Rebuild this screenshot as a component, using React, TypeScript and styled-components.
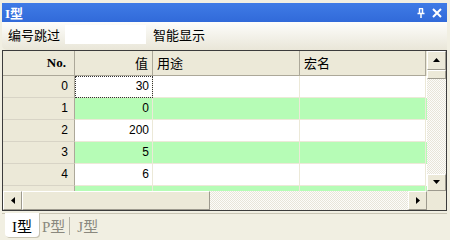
import { FC } from 'react';
import styled, { createGlobalStyle } from 'styled-components';

const GlobalStyle = createGlobalStyle`
  html, body {
    margin: 0;
    padding: 0;
    background: #f1efe2;
  }
`;

const Frame = styled.div`
  width: 450px;
  height: 240px;
  box-sizing: border-box;
  padding: 3px 3px 0 2px;
  background: #f1efe2;
  display: flex;
  flex-direction: column;
  overflow: hidden;
  font-family: "Noto Sans CJK SC", sans-serif;
`;

const TitleBar = styled.div`
  height: 19px;
  display: flex;
  align-items: center;
  justify-content: space-between;
  padding: 0 5px 0 3px;
  background: linear-gradient(#3f7be6, #316ad9);
  color: #fff;
`;

const Title = styled.span`
  font-family: "Liberation Serif", "Noto Sans CJK SC", serif;
  font-weight: bold;
  font-size: 13px;
`;

const TitleButtons = styled.div`
  display: flex;
  align-items: center;
  gap: 7px;
`;

const Toolbar = styled.div`
  height: 28px;
  display: flex;
  align-items: center;
  padding: 0 0 2px 6px;
  box-sizing: border-box;
  background: linear-gradient(#fdfdfb, #e9e6d8);
  border-bottom-left-radius: 5px;
  font-size: 13px;
  color: #000;
`;

const ToolInput = styled.div`
  width: 81px;
  height: 19px;
  margin: 0 7px 0 5px;
  background: #fff;
`;

const Grid = styled.div`
  height: 161px;
  border: 1px solid #3c3c3c;
  display: flex;
  flex-direction: column;
  background: #ece9d8;
`;

const GridMain = styled.div`
  display: flex;
  height: 140px;
`;

const Cells = styled.div`
  flex: 1;
  overflow: hidden;
  background: #fff;
`;

const Row = styled.div<{ $green?: boolean; $header?: boolean }>`
  display: grid;
  grid-template-columns: 72px 78px 147px 126px;
  height: ${({ $header }) => ($header ? '25px' : '22px')};
  background: ${({ $green, $header }) => ($header ? '#ece9d8' : $green ? '#b6fcb6' : '#fff')};
`;

const HeadCell = styled.div<{ $right?: boolean; $bold?: boolean }>`
  display: flex;
  align-items: center;
  justify-content: ${({ $right }) => ($right ? 'flex-end' : 'flex-start')};
  padding: 0 4px;
  border-right: 1px solid #aca899;
  border-bottom: 1px solid #aca899;
  font-size: 13px;
  font-family: ${({ $bold }) => ($bold ? '"Liberation Serif", serif' : '"Noto Sans CJK SC", sans-serif')};
  font-weight: ${({ $bold }) => ($bold ? 'bold' : 'normal')};
  padding-right: ${({ $bold }) => ($bold ? '8px' : '4px')};
`;

const RowHead = styled.div`
  display: flex;
  align-items: center;
  justify-content: flex-end;
  padding-right: 6px;
  background: #ece9d8;
  border-right: 1px solid #aca899;
  border-bottom: 1px solid #d8d4c6;
  font-family: "Liberation Sans", sans-serif;
  font-size: 12px;
`;

const Cell = styled.div<{ $focus?: boolean; $right?: boolean }>`
  display: flex;
  align-items: center;
  justify-content: ${({ $right }) => ($right ? 'flex-end' : 'flex-start')};
  padding-right: 3px;
  border-right: 1px solid #ece9d8;
  border-bottom: 1px solid #ece9d8;
  outline: ${({ $focus }) => ($focus ? '1px dotted #333' : 'none')};
  outline-offset: -1px;
  font-family: "Liberation Sans", sans-serif;
  font-size: 12px;
`;

const VScroll = styled.div`
  width: 19px;
  display: flex;
  flex-direction: column;
  background: repeating-conic-gradient(#fcfcfa 0 25%, #e8e5d9 0 50%) 0 0 / 2px 2px;
`;

const ScrollBtn = styled.div<{ $h?: number }>`
  width: 17px;
  height: ${({ $h }) => $h ?? 19}px;
  display: flex;
  align-items: center;
  justify-content: center;
  background: #ece9d8;
  border: 1px solid;
  border-color: #fff #9d9a8e #9d9a8e #fff;
`;

const Thumb = styled.div`
  width: 17px;
  height: 7px;
  background: #ece9d8;
  border: 1px solid;
  border-color: #fff #9d9a8e #9d9a8e #fff;
`;

const Spacer = styled.div`
  flex: 1;
`;

const HScrollRow = styled.div`
  display: flex;
  height: 19px;
`;

const HScroll = styled.div`
  flex: 1;
  display: flex;
  background: repeating-conic-gradient(#fcfcfa 0 25%, #e8e5d9 0 50%) 0 0 / 2px 2px;
`;

const HBtn = styled.div<{ $w?: number }>`
  width: ${({ $w }) => $w ?? 17}px;
  height: 17px;
  display: flex;
  align-items: center;
  justify-content: center;
  background: #ece9d8;
  border: 1px solid;
  border-color: #fff #9d9a8e #9d9a8e #fff;
`;

const Corner = styled.div`
  width: 19px;
  background: #ece9d8;
`;

const TabStrip = styled.div`
  margin-top: 2px;
  border-top: 1px solid #c9c5b4;
  display: flex;
  align-items: flex-start;
  padding-left: 3px;
  height: 26px;
`;

const Tab = styled.div<{ $active?: boolean }>`
  height: 24px;
  display: flex;
  align-items: center;
  padding: ${({ $active }) => ($active ? '0 7px' : '0 2px 0 3px')};
  margin-top: -1px;
  background: ${({ $active }) => ($active ? '#fff' : 'transparent')};
  border-radius: 0 0 4px 4px;
  box-shadow: ${({ $active }) => ($active ? '1px 1px 0 #c9c5b4' : 'none')};
  color: ${({ $active }) => ($active ? '#000' : '#8a887e')};
  font-family: "Liberation Serif", "Noto Sans CJK SC", serif;
  font-size: 15px;
`;

const TabSep = styled.div`
  width: 1px;
  height: 18px;
  margin: 3px 4px 0 2px;
  background: #b5b2a5;
`;

const Up = () => (
  <svg width="7" height="4" viewBox="0 0 7 4"><path d="M3.5 0 L7 4 L0 4 Z" fill="#000" /></svg>
);
const Down = () => (
  <svg width="7" height="4" viewBox="0 0 7 4"><path d="M0 0 L7 0 L3.5 4 Z" fill="#000" /></svg>
);
const Left = () => (
  <svg width="4" height="7" viewBox="0 0 4 7"><path d="M4 0 L4 7 L0 3.5 Z" fill="#000" /></svg>
);
const Right = () => (
  <svg width="4" height="7" viewBox="0 0 4 7"><path d="M0 0 L4 3.5 L0 7 Z" fill="#000" /></svg>
);

const rows = [
  { no: '0', val: '30' },
  { no: '1', val: '0' },
  { no: '2', val: '200' },
  { no: '3', val: '5' },
  { no: '4', val: '6' },
  { no: '', val: '' },
];

const App: FC = () => (
  <>
    <GlobalStyle />
    <Frame>
      <TitleBar>
        <Title>I型</Title>
        <TitleButtons>
          <svg width="8" height="10" viewBox="0 0 8 10">
            <path d="M2 0.5h4M2.5 0.5v5M5.5 0.5v5M0.5 5.5h7M4 5.5v4.5" stroke="#fff" strokeWidth="1.5" fill="none" />
          </svg>
          <svg width="10" height="10" viewBox="0 0 10 10">
            <path d="M1 1 L9 9 M9 1 L1 9" stroke="#fff" strokeWidth="2" />
          </svg>
        </TitleButtons>
      </TitleBar>

      <Toolbar>
        <span>编号跳过</span>
        <ToolInput />
        <span>智能显示</span>
      </Toolbar>

      <Grid>
        <GridMain>
          <Cells>
            <Row $header>
              <HeadCell $right $bold>No.</HeadCell>
              <HeadCell $right>值</HeadCell>
              <HeadCell>用途</HeadCell>
              <HeadCell>宏名</HeadCell>
            </Row>
            {rows.map((r, i) => (
              <Row key={i} $green={i % 2 === 1}>
                <RowHead>{r.no}</RowHead>
                <Cell $right $focus={i === 0}>{r.val}</Cell>
                <Cell />
                <Cell />
              </Row>
            ))}
          </Cells>
          <VScroll>
            <ScrollBtn $h={17}><Up /></ScrollBtn>
            <Thumb />
            <Spacer />
            <ScrollBtn $h={15}><Down /></ScrollBtn>
          </VScroll>
        </GridMain>
        <HScrollRow>
          <HScroll>
            <HBtn><Left /></HBtn>
            <HBtn $w={186} />
            <Spacer />
            <HBtn><Right /></HBtn>
          </HScroll>
          <Corner />
        </HScrollRow>
      </Grid>

      <TabStrip>
        <Tab $active>I型</Tab>
        <Tab>P型</Tab>
        <TabSep />
        <Tab>J型</Tab>
      </TabStrip>
    </Frame>
  </>
);

export default App;
